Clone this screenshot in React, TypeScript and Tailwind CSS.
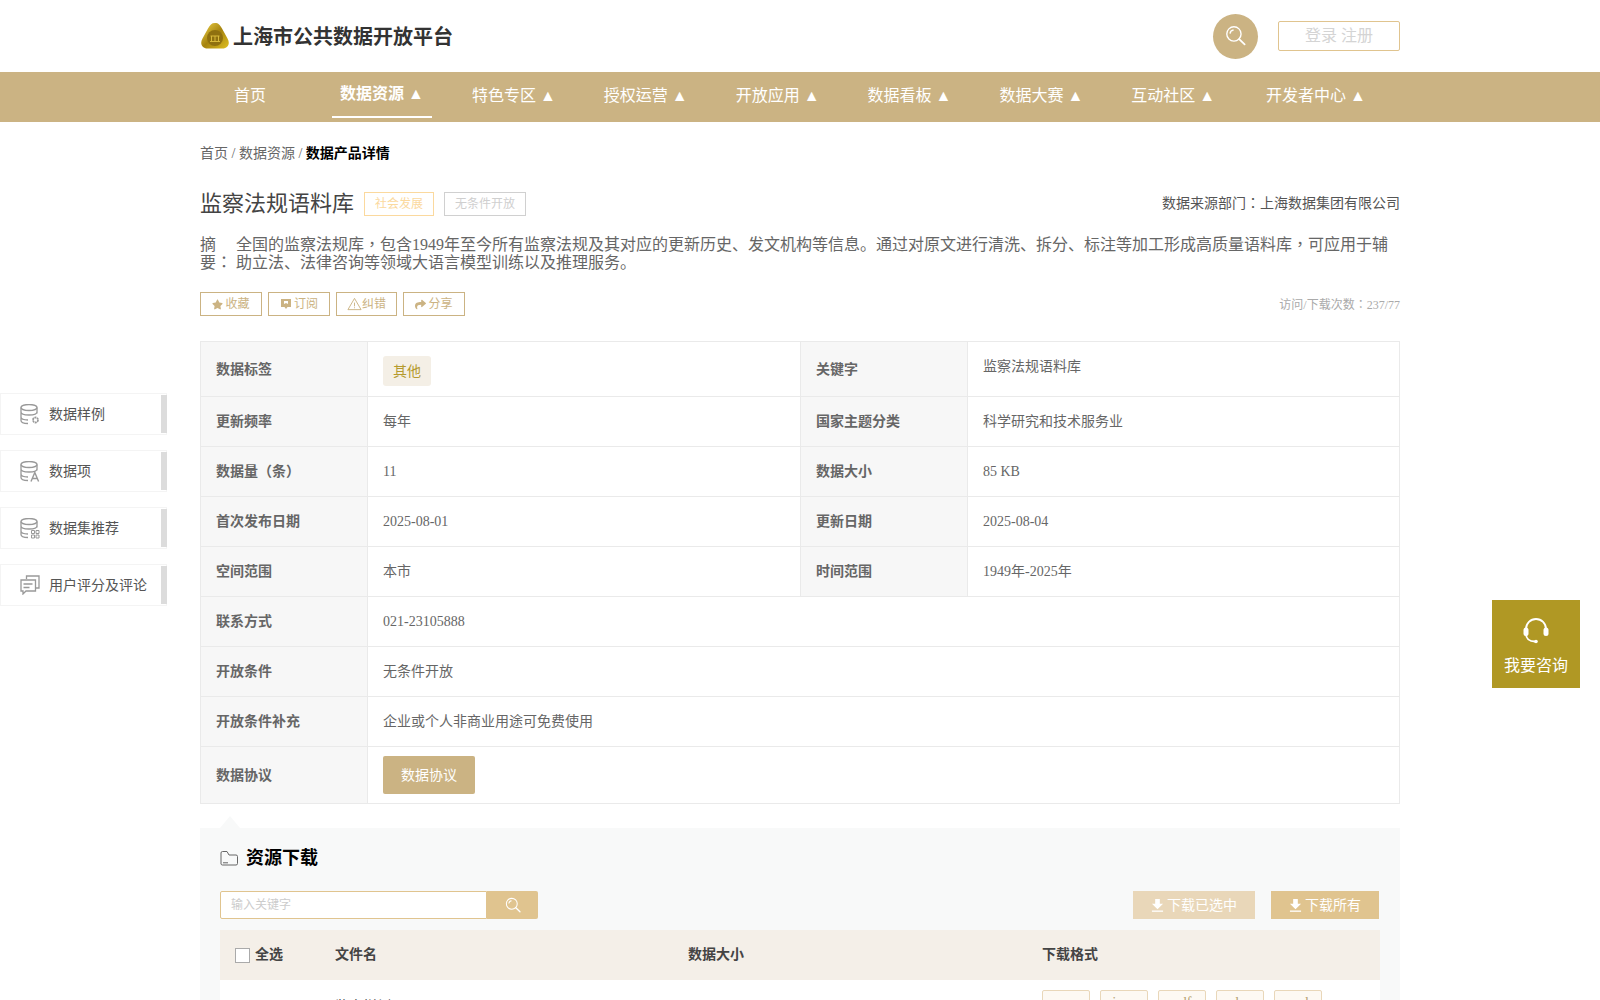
import { FaStar, FaShare } from "react-icons/fa";

const navItems = ["首页", "数据资源 ▲", "特色专区 ▲", "授权运营 ▲", "开放应用 ▲", "数据看板 ▲", "数据大赛 ▲", "互动社区 ▲", "开发者中心 ▲"];

function SearchIcon({ className }: { className?: string }) {
  return (
    <svg viewBox="0 0 20 20" fill="none" stroke="currentColor" strokeWidth="1.3" className={className}>
      <circle cx="8.5" cy="8.5" r="6.8" />
      <path d="M4.8 8.2a3.8 3.8 0 0 1 3.4-3.4" />
      <path d="M13.5 13.5l5.2 5" strokeLinecap="round" strokeWidth="1.7" />
    </svg>
  );
}

function Logo() {
  return (
    <svg viewBox="0 0 28 26" className="ml-[1px] w-[28px] h-[26px] shrink-0">
      <defs>
        <linearGradient id="gold" x1="0" y1="0" x2="1" y2="1">
          <stop offset="0" stopColor="#f2d548" />
          <stop offset="0.5" stopColor="#a5830f" />
          <stop offset="1" stopColor="#e0c020" />
        </linearGradient>
      </defs>
      <path d="M14 0c3.500 0 5 2 7 5.500l5.500 10c3 5 .5 10-5 10H6.500c-5.500 0-8-5-5-10L7 5.500C9 2 10.500 0 14 0z" fill="url(#gold)" />
      <circle cx="14" cy="15" r="8" fill="#8f700f" />
      <path d="M9.500 13h9M10.500 13v5M14 13v5M17.500 13v5M9 18.500h10" stroke="#d8b93a" strokeWidth="1" fill="none" />
    </svg>
  );
}

function DbIcon({ badge }: { badge: "gear" | "a" | "grid" }) {
  return (
    <svg viewBox="0 0 20 21" fill="none" stroke="#999" strokeWidth="1.3" className="w-[20px] h-[21px]">
      <ellipse cx="9" cy="3.500" rx="8" ry="3" />
      <path d="M1 3.500v13c0 1.700 3 3 7 3M17 3.500v6M1 8c0 1.700 3.500 3 8 3s8-1.300 8-3M1 13c0 1.700 3 2.900 7 3" />
      {badge === "gear" && <circle cx="15.500" cy="16" r="2.500" strokeWidth="1.800" strokeDasharray="2 0.600" />}
      {badge === "a" && <path d="M11 20.500l3.800-9 3.800 9M12.300 17.500h5" strokeWidth="1.400" />}
      {badge === "grid" && (
        <path d="M11.500 12.500h3v3h-3zM16 12.500h3v3h-3zM11.500 17h3v3h-3zM16 17h3v3h-3z" strokeWidth="1" />
      )}
    </svg>
  );
}

function CommentIcon() {
  return (
    <svg viewBox="0 0 20 20" fill="none" stroke="#999" strokeWidth="1.300" className="w-[20px] h-[20px]">
      <path d="M6.500 4V1h12.500v12h-3" />
      <path d="M1 5h14.500v11H6l-3 3v-3H1z" />
      <path d="M3.500 9h9M3.500 12.500h6" />
    </svg>
  );
}

function DownloadIcon() {
  return (
    <svg viewBox="0 0 14 14" fill="#fff" className="w-[13px] h-[13px]">
      <path d="M4.500 0h5v5h3.500L7 11 1 5h3.500z" />
      <rect x="1" y="12.400" width="12" height="1.400" />
    </svg>
  );
}

function SideItem({ label, icon, className }: { label: string; icon: React.ReactNode; className: string }) {
  return (
    <div className={`absolute left-0 w-[167px] h-[42px] border border-[#f4f4f4] bg-white flex items-center ${className}`}>
      <div className="ml-[19px] w-[20px] flex justify-center">{icon}</div>
      <span className="ml-[9px] text-[14px] text-[#555]">{label}</span>
      <div className="absolute right-[-1px] top-[1px] bottom-[1px] w-[6px] bg-[#dcdcdc]" />
    </div>
  );
}

// full-width comma and colon sit centred in the reference
function Punct({ children }: { children: React.ReactNode }) {
  return <span className="leading-[10px] font-['Noto_Sans_CJK_TC',sans-serif]">{children}</span>;
}

function Th({ children }: { children: React.ReactNode }) {
  return <td className="bg-[#f7f7f7] border border-[#eaeaea] pl-[15px] font-bold text-[#666]">{children}</td>;
}

function Td({ children, colSpan }: { children: React.ReactNode; colSpan?: number }) {
  return (
    <td colSpan={colSpan} className="border border-[#eaeaea] pl-[15px] text-[#666]">
      {children}
    </td>
  );
}

export default function App() {
  return (
    <div className="relative h-screen overflow-hidden bg-white font-['Liberation_Serif','Noto_Sans_CJK_SC',serif] text-[14px]">
      {/* header */}
      <header className="h-[72px] w-[1200px] mx-auto flex items-center">
        <Logo />
        <span className="ml-[4px] text-[20px] font-bold text-[#333] font-['Noto_Sans_CJK_SC',sans-serif]">上海市公共数据开放平台</span>
        <div className="ml-auto w-[45px] h-[45px] rounded-full bg-[#cbb383] flex items-center justify-center text-white">
          <SearchIcon className="w-[21px] h-[21px] -mt-[2px]" />
        </div>
        <div className="ml-[20px] w-[122px] h-[30px] border border-[#e0c48f] rounded-[2px] flex items-center justify-center text-[16px] text-[#d4d4d4]">
          登录 注册
        </div>
      </header>

      {/* nav */}
      <nav className="h-[50px] bg-[#cbb383] font-['Liberation_Serif','Noto_Sans_CJK_TC',serif]">
        <div className="w-[1200px] mx-auto flex h-full">
          {navItems.map((item, i) => (
            <div
              key={item}
              className={
                i === 0
                  ? "w-[100px] text-center text-white text-[16px] leading-[48px]"
                  : i === 1
                    ? "ml-[32px] w-[100px] h-[46px] text-center text-white text-[16px] font-bold leading-[44px] border-b-2 border-white"
                    : i === 8
                      ? "ml-[35px] px-[8px] text-white text-[16px] leading-[48px] whitespace-nowrap"
                      : "ml-[32px] px-[8px] text-white text-[16px] leading-[48px] whitespace-nowrap"
              }
            >
              {item}
            </div>
          ))}
        </div>
      </nav>

      <main className="w-[1200px] mx-auto">
        {/* breadcrumb */}
        <div className="pt-[22px] leading-[20px] text-[#666]">
          首页 / 数据资源 / <span className="font-bold text-black">数据产品详情</span>
        </div>

        {/* title */}
        <div className="mt-[27px] flex items-center h-[24px]">
          <h1 className="text-[22px] text-[#444]">监察法规语料库</h1>
          <span className="ml-[10px] mt-[1px] w-[70px] h-[24px] border border-[#fbd99e] text-[#fbd99e] text-[12px] flex items-center justify-center">社会发展</span>
          <span className="ml-[10px] mt-[1px] w-[82px] h-[24px] border border-[#d0d0d0] text-[#cfcfcf] text-[12px] flex items-center justify-center">无条件开放</span>
          <span className="ml-auto text-[#555]">
            数据来源部门<Punct>：</Punct>上海数据集团有限公司
          </span>
        </div>

        {/* abstract */}
        <div className="mt-[21px] flex text-[16px] leading-[18px] text-[#666]">
          <div className="w-[36px] shrink-0 pr-[4px]">
            摘要<Punct>：</Punct>
          </div>
          <p className="w-[1160px]">
            全国的监察法规库<Punct>，</Punct>包含1949年至今所有监察法规及其对应的更新历史、发文机构等信息。通过对原文进行清洗、拆分、标注等加工形成高质量语料库<Punct>，</Punct>可应用于辅助立法、法律咨询等领域大语言模型训练以及推理服务。
          </p>
        </div>

        {/* actions */}
        <div className="mt-[20px] flex items-center text-[12px] text-[#cbb383]">
          <div className="w-[62px] h-[24px] border border-[#cbb383] flex items-center justify-center gap-[2px]">
            <FaStar className="w-[11px] h-[11px]" />
            收藏
          </div>
          <div className="ml-[6px] w-[62px] h-[24px] border border-[#cbb383] flex items-center justify-center gap-[2px]">
            <svg viewBox="0 0 12 12" className="w-[12px] h-[12px]" fill="#cbb383">
              <path d="M1 1h10v8H7.500L6 11 4.500 9H1z" />
              <path d="M4 3h4v3L6 5 4 6z" fill="#fff" />
            </svg>
            订阅
          </div>
          <div className="ml-[6px] w-[61px] h-[24px] border border-[#cbb383] flex items-center justify-center">
            <svg viewBox="0 0 16 14" className="w-[15px] h-[14px]" fill="none" stroke="#cbb383" strokeWidth="1">
              <path d="M8 1l7 12H1zM8 5.500v4M8 10.500v1" />
            </svg>
            纠错
          </div>
          <div className="ml-[6px] w-[62px] h-[24px] border border-[#cbb383] flex items-center justify-center gap-[2px]">
            <FaShare className="w-[11px] h-[11px]" />
            分享
          </div>
          <span className="ml-auto text-[#aaa] pt-[1px]">
            访问/下载次数<Punct>：</Punct>237/77
          </span>
        </div>

        {/* info table */}
        <table className="mt-[25px] w-[1199px] table-fixed border-collapse">
          <colgroup>
            <col className="w-[167px]" />
            <col className="w-[433px]" />
            <col className="w-[167px]" />
            <col className="w-[432px]" />
          </colgroup>
          <tbody>
            <tr className="h-[55px]">
              <Th>数据标签</Th>
              <Td>
                <span className="mt-[4px] inline-flex items-center justify-center w-[48px] h-[30px] rounded-[3px] bg-[#f4efe6] text-[#b59a2e]">其他</span>
              </Td>
              <Th>关键字</Th>
              <Td>
                <div className="pb-[6px]">监察法规语料库</div>
              </Td>
            </tr>
            <tr className="h-[50px]">
              <Th>更新频率</Th>
              <Td>每年</Td>
              <Th>国家主题分类</Th>
              <Td>科学研究和技术服务业</Td>
            </tr>
            <tr className="h-[50px]">
              <Th>数据量（条）</Th>
              <Td>11</Td>
              <Th>数据大小</Th>
              <Td>85 KB</Td>
            </tr>
            <tr className="h-[50px]">
              <Th>首次发布日期</Th>
              <Td>2025-08-01</Td>
              <Th>更新日期</Th>
              <Td>2025-08-04</Td>
            </tr>
            <tr className="h-[50px]">
              <Th>空间范围</Th>
              <Td>本市</Td>
              <Th>时间范围</Th>
              <Td>1949年-2025年</Td>
            </tr>
            <tr className="h-[50px]">
              <Th>联系方式</Th>
              <Td colSpan={3}>021-23105888</Td>
            </tr>
            <tr className="h-[50px]">
              <Th>开放条件</Th>
              <Td colSpan={3}>无条件开放</Td>
            </tr>
            <tr className="h-[50px]">
              <Th>开放条件补充</Th>
              <Td colSpan={3}>企业或个人非商业用途可免费使用</Td>
            </tr>
            <tr className="h-[57px]">
              <Th>数据协议</Th>
              <Td colSpan={3}>
                <div className="w-[92px] h-[38px] rounded-[2px] bg-[#cbb383] text-white flex items-center justify-center">数据协议</div>
              </Td>
            </tr>
          </tbody>
        </table>

        {/* downloads */}
        <section className="relative mt-[24px] bg-[#f8f9f9] px-[20px] pb-[40px]">
          <div className="absolute left-[20px] top-[-12px] w-0 h-0 border-x-[10px] border-x-transparent border-b-[12px] border-b-[#f8f9f9]" />
          <div className="pt-[10px] flex items-center h-[40px] box-content">
            <svg viewBox="0 0 18 16" fill="none" stroke="#666" strokeWidth="1" className="w-[18px] h-[16px]">
              <path d="M1 14V3a1.500 1.500 0 0 1 1.500-1.500H7L9 5h7a1.500 1.500 0 0 1 1.500 1.500v7A1.500 1.500 0 0 1 16 15H2.500A1.500 1.500 0 0 1 1 14z" />
              <path d="M3 12.800h5" />
            </svg>
            <h2 className="ml-[8px] text-[18px] font-bold text-black">资源下载</h2>
          </div>
          <div className="mt-[13px] flex items-center h-[28px]">
            <div className="w-[267px] h-[28px] border border-[#e0c48f] bg-white rounded-l-[2px] pl-[10px] flex items-center text-[12px] text-[#ccc]">输入关键字</div>
            <div className="w-[51px] h-[28px] bg-[#e0c48f] rounded-r-[2px] flex items-center justify-center text-white">
              <SearchIcon className="w-[16px] h-[16px]" />
            </div>
            <div className="ml-auto w-[122px] h-[28px] bg-[#e9d7b9] text-white flex items-center justify-center gap-[3px]">
              <DownloadIcon />
              下载已选中
            </div>
            <div className="ml-[16px] mr-[1px] w-[108px] h-[28px] bg-[#e0c48f] text-white flex items-center justify-center gap-[3px]">
              <DownloadIcon />
              下载所有
            </div>
          </div>
          <div className="mt-[11px] h-[50px] bg-[#f4efe8] flex items-center font-bold text-[#444]">
            <div className="w-[115px] pl-[15px] flex items-center gap-[5px]">
              <span className="w-[15px] h-[15px] border border-[#aaa] bg-white" />
              <span className="-mt-[2px]">全选</span>
            </div>
            <div className="w-[353px] -mt-[2px]">文件名</div>
            <div className="w-[354px] -mt-[2px]">数据大小</div>
            <div className="-mt-[2px]">下载格式</div>
          </div>
          <div className="h-[60px] bg-white flex items-start text-[#444]">
            <div className="w-[115px] pl-[15px] pt-[20px]">
              <span className="block w-[15px] h-[15px] border border-[#aaa] bg-white" />
            </div>
            <div className="w-[353px] pt-[16px]">监察样例</div>
            <div className="w-[354px] pt-[15px] font-bold">7 KB</div>
            <div className="pt-[10px] flex gap-[10px]">
              {["csv", "json", "pdf", "xlsx", "xml"].map((f) => (
                <span key={f} className="w-[48px] h-[30px] pb-[6px] border border-[#e9d7b9] rounded-[2px] bg-[#fdf9f3] text-[#b59f70] flex items-center justify-center">
                  {f}
                </span>
              ))}
            </div>
          </div>
        </section>
      </main>

      {/* side nav */}
      <SideItem className="top-[393px]" label="数据样例" icon={<DbIcon badge="gear" />} />
      <SideItem className="top-[450px]" label="数据项" icon={<DbIcon badge="a" />} />
      <SideItem className="top-[507px]" label="数据集推荐" icon={<DbIcon badge="grid" />} />
      <SideItem className="top-[564px]" label="用户评分及评论" icon={<CommentIcon />} />

      {/* consult */}
      <div className="absolute left-[1492px] top-[600px] w-[88px] h-[88px] bg-[#b09824] text-white flex flex-col items-center">
        <svg viewBox="0 0 28 28" className="mt-[17px] w-[28px] h-[28px]" fill="none" stroke="#fff" strokeWidth="1.800">
          <path d="M4 12a10 10 0 0 1 20 0" />
          <path d="M4 17c0 4 3 7.500 9 7.500" />
          <rect x="1.500" y="10.500" width="5" height="8.500" rx="2.500" fill="#fff" stroke="none" />
          <rect x="21.500" y="10.500" width="5" height="8.500" rx="2.500" fill="#fff" stroke="none" />
          <circle cx="14" cy="24.500" r="1.800" fill="#fff" stroke="none" />
        </svg>
        <span className="mt-[9px] text-[16px]">我要咨询</span>
      </div>
    </div>
  );
}
